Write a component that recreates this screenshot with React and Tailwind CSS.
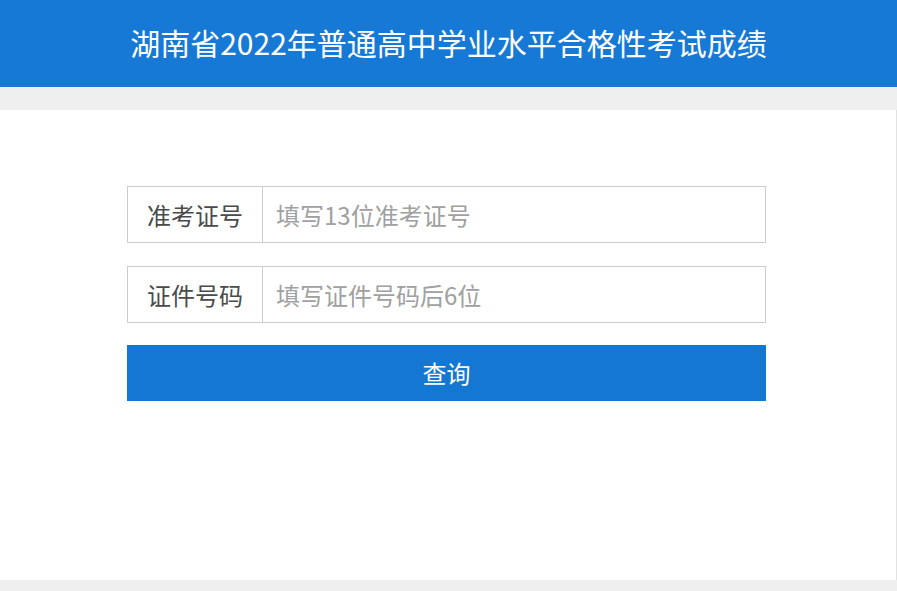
import React from 'react';

const cjk = { fontFamily: '"Microsoft YaHei", "Noto Sans CJK SC", "Noto Sans", sans-serif' };

const Field = ({ label, placeholder }) => (
    <div className="flex h-[57px] border border-[#cccccc] bg-white">
        <div className="flex w-[135px] shrink-0 items-center justify-center border-r border-[#cccccc] text-[24px] text-[#4a4a4a]">
            {label}
        </div>
        <input
            type="text"
            placeholder={placeholder}
            className="min-w-0 flex-1 px-[13px] text-[24px] text-[#333333] placeholder-[#a0a0a0] outline-none"
            style={cjk}
        />
    </div>
);

export default function App() {
    return (
        <div className="flex h-[591px] flex-col bg-[#efefef]" style={cjk}>
            <header className="flex h-[87px] shrink-0 items-center justify-center bg-[#1679d6] pb-[3px] text-[30px] text-white">
                湖南省2022年普通高中学业水平合格性考试成绩
            </header>
            <main className="mt-[23px] h-[470px] border-r border-[#e2e2e2] bg-white">
                <div className="mx-[127px] mt-[76px] w-[639px]">
                    <Field label="准考证号" placeholder="填写13位准考证号" />
                    <div className="mt-[23px]">
                        <Field label="证件号码" placeholder="填写证件号码后6位" />
                    </div>
                    <button className="mt-[22px] flex h-[56px] w-full items-center justify-center bg-[#1477d1] text-[24px] text-white">
                        查询
                    </button>
                </div>
            </main>
        </div>
    );
}
